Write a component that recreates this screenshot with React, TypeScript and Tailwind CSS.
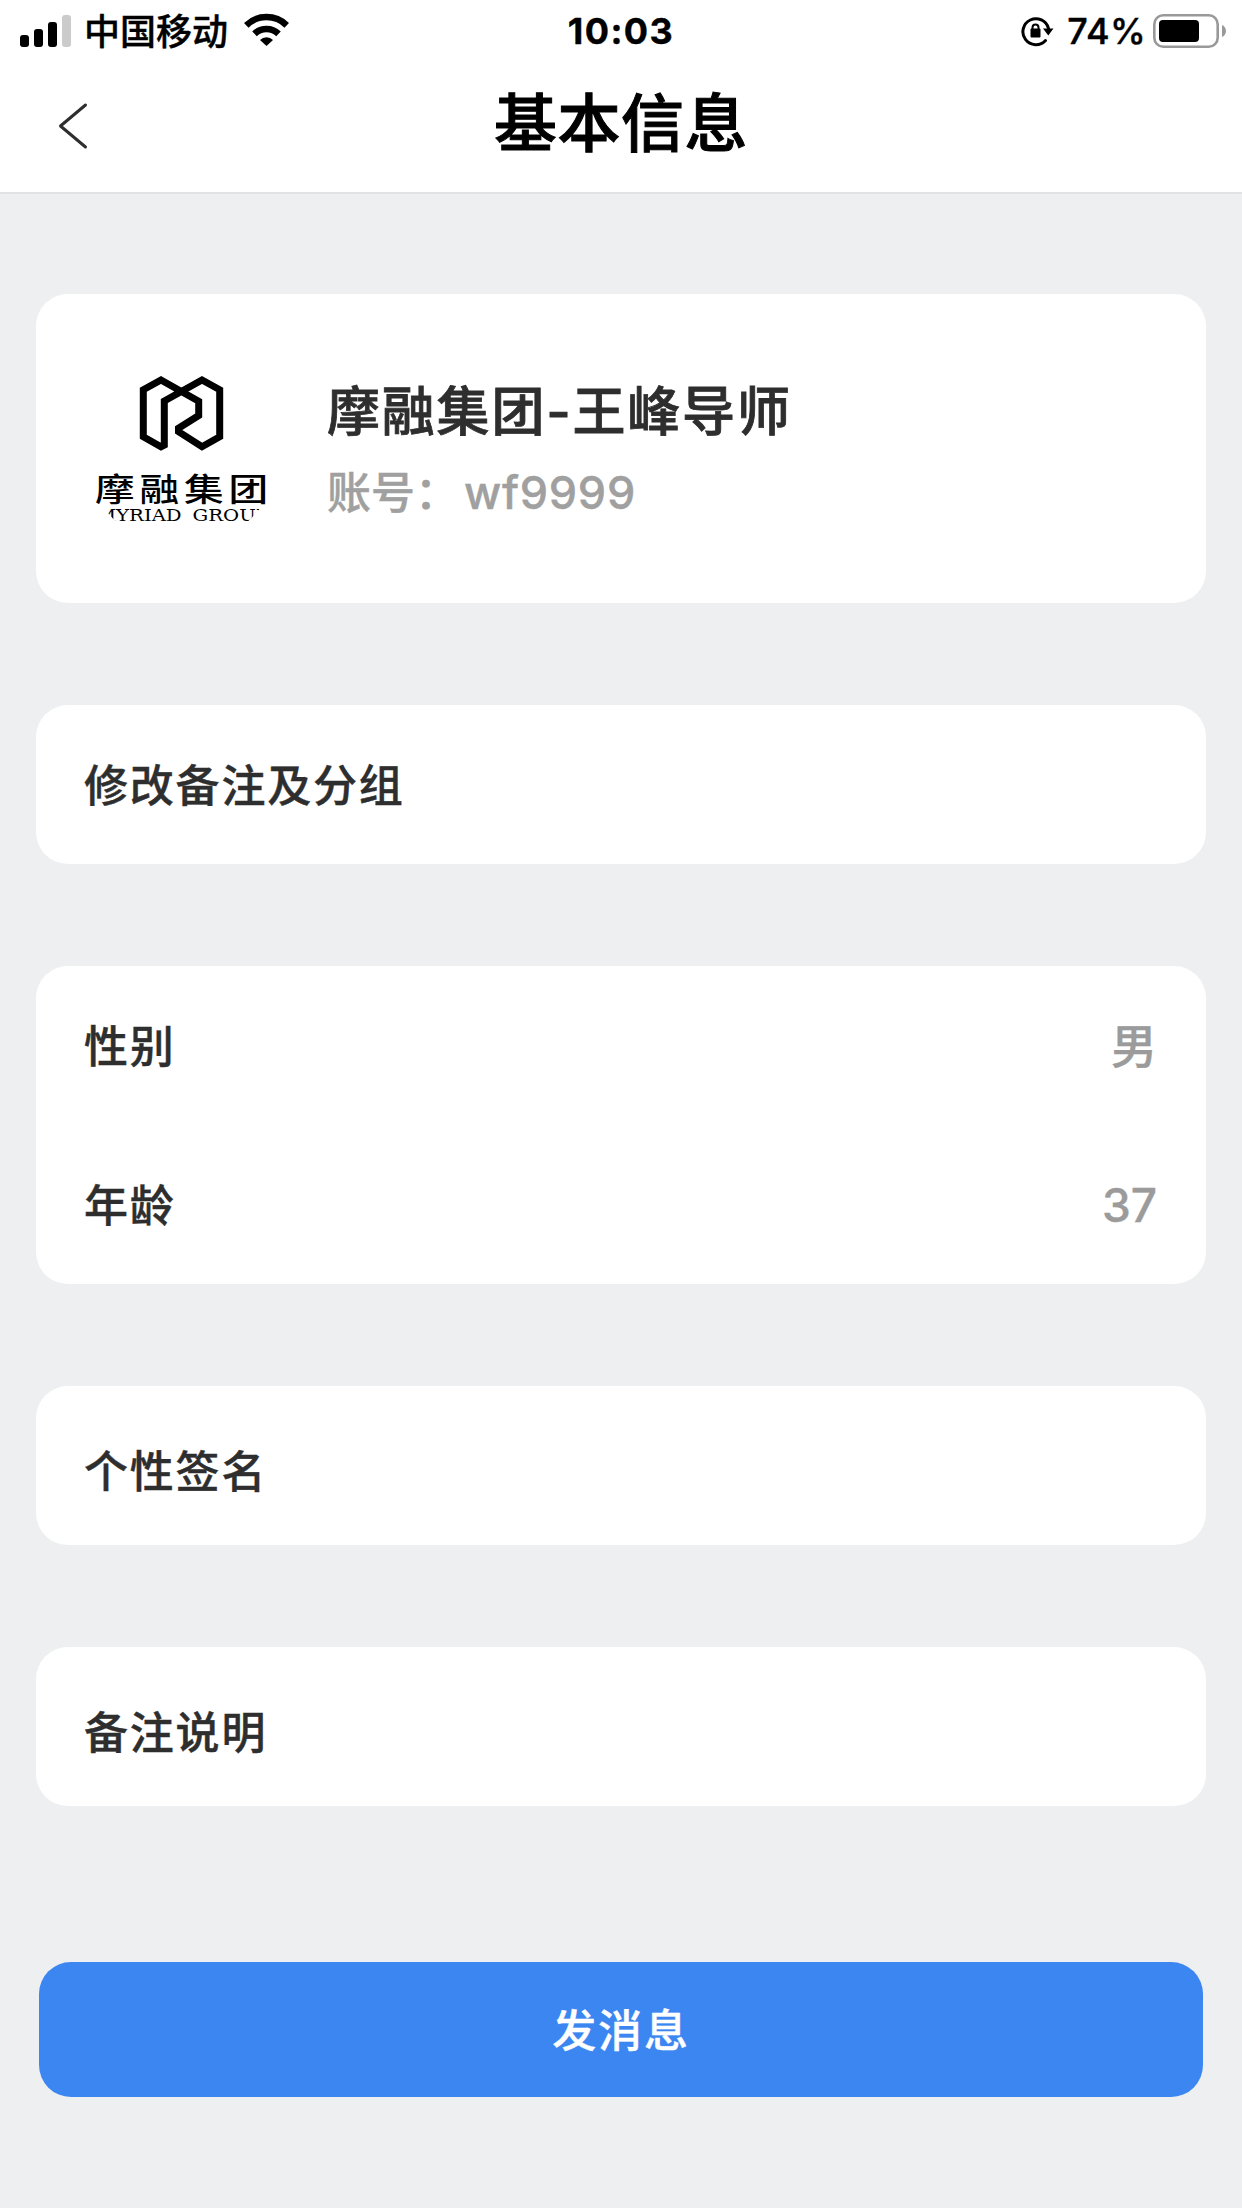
import type { ReactNode } from 'react';

export default function App() {
  return (
    <main className="flex h-[2208px] w-[1242px] flex-col overflow-hidden bg-[#edeff1] font-['Inter','Noto_Sans_CJK_SC',sans-serif] text-[#2e2e2e] [-webkit-text-stroke:0.4px_currentColor]">
      <header className="flex h-[194px] shrink-0 flex-col border-b-2 border-[#e0e2e4] bg-white text-black">
        <StatusBar />
        <div className="grid h-[131px] grid-cols-[145px_1fr_145px] items-center">
          <button aria-label="返回" className="pl-[57px]">
            <BackIcon />
          </button>
          <h1 className="pb-[6px] text-center text-[63px] leading-[92px] font-medium tracking-[0.5px] [-webkit-text-stroke:1px_currentColor]">基本信息</h1>
        </div>
      </header>

      <div className="flex flex-col px-9 pt-[100px]">
        <section className="flex h-[309px] items-center rounded-[32px] bg-white pl-[46px]">
          <Avatar />
          <div className="ml-[45px] flex flex-col pt-2">
            <h2 className="text-[53px] leading-[80px] font-medium tracking-[1.8px] [-webkit-text-stroke:0.8px_currentColor]">摩融集团-王峰导师</h2>
            <p className="text-[44px] leading-[82px] font-medium text-[#a0a0a0]">
              账号：<span className="ml-[5px] text-[45px] tracking-[0.7px]">wf9999</span>
            </p>
          </div>
        </section>

        <Card>
          <Row label="修改备注及分组" />
        </Card>
        <Card>
          <Row label="性别" value="男" />
          <Row label="年龄" value="37" />
        </Card>
        <Card>
          <Row label="个性签名" className="pt-[9px]" />
        </Card>
        <Card>
          <Row label="备注说明" className="pt-[9px]" />
        </Card>

        <button className="mx-[3px] mt-[156px] h-[135px] rounded-[32px] bg-[#3b86f1] pt-[3px] text-[44px] font-medium tracking-[1.8px] text-white">
          发消息
        </button>
      </div>
    </main>
  );
}

function StatusBar() {
  return (
    <div className="grid h-[60px] grid-cols-[1fr_auto_1fr] items-center px-5">
      <div className="flex items-center">
        <SignalIcon />
        <span className="mr-4 ml-3 pt-[2px] text-[36px] leading-[60px] font-medium">中国移动</span>
        <WifiIcon />
      </div>
      <span className="text-[36px] leading-[60px] font-bold tracking-[1.4px]">10:03</span>
      <div className="flex items-center justify-end">
        <RotationLockIcon />
        <span className="mr-[7px] ml-[13px] text-[36px] leading-[60px] font-medium tracking-[0.3px]">74%</span>
        <BatteryIcon />
      </div>
    </div>
  );
}

function Card({ children }: { children: ReactNode }) {
  return <section className="mt-[102px] rounded-[32px] bg-white">{children}</section>;
}

function Row({ label, value, className = '' }: { label: string; value?: string; className?: string }) {
  return (
    <div className={`flex h-[159px] items-center justify-between pr-[49px] pl-12 text-[44px] font-medium ${className}`}>
      <span className="pt-[3px] tracking-[1.8px]">{label}</span>
      {value && <span className="pt-[2px] text-[46px] text-[#9b9b9b]">{value}</span>}
    </div>
  );
}

function BackIcon() {
  return (
    <svg width="32" height="48" viewBox="0 0 32 48" fill="none" stroke="#2e2e2e" strokeWidth="3" strokeLinecap="round" strokeLinejoin="round">
      <path d="M28.500 3 3.500 24l25 21" />
    </svg>
  );
}

function SignalIcon() {
  return (
    <svg width="52" height="34" viewBox="0 0 52 34">
      <rect x="0" y="21" width="9" height="12" rx="3" />
      <rect x="14" y="15" width="9" height="18" rx="3" />
      <rect x="28" y="8" width="9" height="25" rx="3" />
      <rect x="42" y="1" width="9" height="32" rx="3" fill="#cbcbcb" />
    </svg>
  );
}

function WifiIcon() {
  return (
    <svg width="45" height="34" viewBox="0 0 45 34" className="-mt-[2px]">
      <g fill="none" stroke="#000" strokeWidth="6.500">
        <path d="M2.300 12.300a29 29 0 0 1 40.400 0" />
        <path d="M10.500 20.800a17.300 17.300 0 0 1 24 0" />
      </g>
      <path d="M22.500 33 16 27a9.200 9.200 0 0 1 13 0Z" />
    </svg>
  );
}

function RotationLockIcon() {
  return (
    <svg width="33" height="32" viewBox="0 0 33 32">
      <path d="M24.500 25.500A13 13 0 1 1 27.500 13.500" fill="none" stroke="#000" strokeWidth="3" strokeLinecap="round" />
      <path d="M22 13.500h10.500l-5.200 7Z" />
      <path d="M11.500 15v-2.500a3 3 0 0 1 6 0V15" fill="none" stroke="#000" strokeWidth="2" />
      <rect x="9.500" y="13.500" width="10" height="9" rx="1" />
    </svg>
  );
}

function BatteryIcon() {
  return (
    <svg width="74" height="34" viewBox="0 0 74 34" className="-mr-[5px]">
      <rect x="1.300" y="1.300" width="63.400" height="31.400" rx="9" fill="#fff" stroke="#999" strokeWidth="2.600" />
      <rect x="6" y="6" width="40" height="22" rx="4" />
      <path d="M69 11c5.300 2 5.300 10 0 12Z" fill="#999" />
    </svg>
  );
}

// round avatar, the caption runs past the edge of the circle
function Avatar() {
  return (
    <svg width="200" height="200" viewBox="0 0 200 200">
      <clipPath id="avatar">
        <circle cx="100" cy="100" r="98" />
      </clipPath>
      <path
        d="M79 31 116.700 52.300V66.500L96.500 79.300V82.700L120 97.700 137.700 87.700V40.700L120 31 82.300 52V96L79 97.700 61.300 87.700V40.700Z"
        fill="none"
        stroke="#000"
        strokeWidth="7"
      />
      <text transform="translate(13 152) scale(1.240 1)" fontSize="32" letterSpacing="3.900" fontWeight="500" className="font-['Noto_Sans_CJK_SC',sans-serif] [-webkit-text-stroke:0.8px_#000]">
        摩融集团
      </text>
      <g clipPath="url(#avatar)">
        <text x="14" y="172" fontSize="16.500" textLength="173" lengthAdjust="spacingAndGlyphs" wordSpacing="4" className="font-['DejaVu_Serif',serif] [-webkit-text-stroke:0.6px_#000]">
          MYRIAD GROUP
        </text>
      </g>
    </svg>
  );
}
